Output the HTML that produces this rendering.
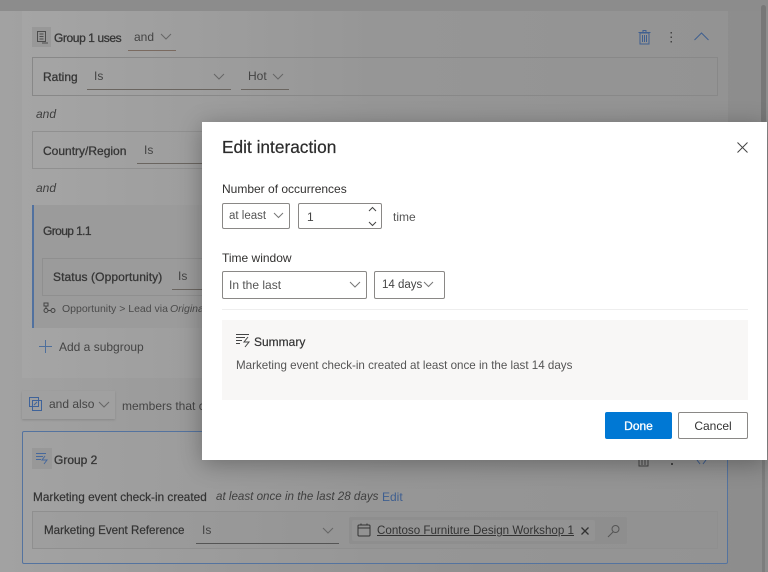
<!DOCTYPE html>
<html><head><meta charset="utf-8"><style>
html,body{margin:0;padding:0}
#p{position:relative;width:768px;height:572px;overflow:hidden;background:linear-gradient(90deg,#a2a2a2 0,#9a9a9a 190px,#8f8f8f 480px,#8d8d8d 768px);font-family:"Liberation Sans",sans-serif;font-size:12px;color:#333}
#p div,#p span.t,#p svg{position:absolute}
.t{white-space:nowrap;line-height:16px}
.b{color:#363636;-webkit-text-stroke:.3px #363636;font-size:12px}
.i{font-style:italic;color:#3f3f3f}
.u{height:1px;background:#6a6560}
.box{border:1px solid #8a8a8a;box-sizing:border-box}
.m{color:#323130}
.in{border:1px solid #8a8886;border-radius:2px;box-sizing:border-box;background:#fff}
svg{fill:none}
</style></head><body><div id="p">
<!-- background -->
<div style="left:0;top:0;width:768px;height:11px;background:#8c8c8c"></div>
<div style="left:22px;top:11px;width:706px;height:367px;background:linear-gradient(90deg,#a5a5a5,#969696 50%,#939393)"></div>
<div style="left:761px;top:5px;width:5px;height:118px;background:#777;border-radius:3px"></div>

<div style="left:32px;top:27px;width:19px;height:20px;background:#989898"></div>
<svg style="left:35px;top:30px" width="14" height="15" stroke="#4c4c4c"><path d="M2.500 1.500h8v10h-8zM4.500 4h4M4.500 6.500h4M4.500 9h4M7 13h6"/></svg>
<span class="t b" style="left:54px;top:30px;letter-spacing:-.4px">Group 1 uses</span>
<span class="t" style="left:134px;top:29px;color:#444">and</span>
<svg style="left:160px;top:33px" width="12" height="8" stroke="#666"><path d="M1 1l5 5 5-5"/></svg>
<div class="u" style="left:128px;top:50px;width:48px;background:#7a6a60"></div>
<div class="box" style="left:32px;top:57px;width:686px;height:39px;border-color:#888"></div>
<span class="t b" style="left:43px;top:69px">Rating</span>
<span class="t" style="left:94px;top:68px;color:#444">Is</span>
<svg style="left:213px;top:73px" width="12" height="8" stroke="#666"><path d="M1 1l5 5 5-5"/></svg>
<div class="u" style="left:87px;top:89px;width:144px"></div>
<span class="t" style="left:248px;top:68px;color:#444">Hot</span>
<svg style="left:272px;top:73px" width="12" height="8" stroke="#666"><path d="M1 1l5 5 5-5"/></svg>
<div class="u" style="left:241px;top:89px;width:48px"></div>
<span class="t i" style="left:36px;top:106px">and</span>
<div class="box" style="left:32px;top:131px;width:180px;height:38px;border-color:#909090"></div>
<span class="t b" style="left:43px;top:143px">Country/Region</span>
<span class="t" style="left:144px;top:142px;color:#444">Is</span>
<div class="u" style="left:137px;top:163px;width:70px"></div>
<span class="t i" style="left:36px;top:180px">and</span>

<div style="left:33px;top:205px;width:170px;height:123px;background:#9b9b9b"></div>
<div style="left:32px;top:205px;width:1.500px;height:123px;background:#51719f"></div>
<span class="t b" style="left:43px;top:223px;letter-spacing:-.6px">Group 1.1</span>
<div class="box" style="left:42px;top:258px;width:170px;height:38px;border-color:#8f8f8f"></div>
<span class="t b" style="left:53px;top:269px;letter-spacing:.1px">Status (Opportunity)</span>
<span class="t" style="left:178px;top:268px;color:#444">Is</span>
<div class="u" style="left:172px;top:289px;width:35px"></div>
<svg style="left:43px;top:302px" width="13" height="12" stroke="#444"><rect x="1" y="1" width="4" height="3"/><path d="M3 4v3"/><circle cx="3" cy="8.500" r="2"/><path d="M5 8.500h3"/><circle cx="10" cy="8.500" r="2"/></svg>
<span class="t" style="left:62px;top:301px;font-size:10.500px;color:#4a4a4a">Opportunity &gt; Lead via</span>
<span class="t" style="left:170px;top:301px;font-size:10.500px;font-style:italic;color:#4a4a4a">Origina</span>
<svg style="left:38px;top:339px" width="15" height="15" stroke="#4e6f9c"><path d="M7.500 1v13M1 7.500h13"/></svg>
<span class="t" style="left:59px;top:339px;color:#444">Add a subgroup</span>

<div style="left:22px;top:391px;width:93px;height:28px;background:#a0a0a0;box-shadow:0 1px 2px #888"></div>
<svg style="left:28px;top:396px" width="15" height="17" stroke="#3f639a"><rect x="1.500" y="1.500" width="9" height="9"/><rect x="4.500" y="4.500" width="9" height="10"/><path d="M6 9l3-3"/></svg>
<span class="t" style="left:49px;top:396px;color:#444">and also</span>
<svg style="left:98px;top:401px" width="12" height="8" stroke="#666"><path d="M1 1l5 5 5-5"/></svg>
<span class="t" style="left:122px;top:398px;color:#444">members that c</span>

<div style="left:22px;top:431px;width:706px;height:133px;box-sizing:border-box;border:1px solid #54739f;border-radius:2px;background:linear-gradient(90deg,#a2a2a2,#969696 50%,#939393)"></div>
<div style="left:32px;top:448px;width:20px;height:21px;background:#989898"></div>
<svg style="left:35px;top:452px" width="15" height="14" stroke="#46689c"><path d="M1 1.500h10M1 4.500h7M1 7.500h5M10 4l-3 4h5l-3 4"/></svg>
<span class="t b" style="left:54px;top:452px">Group 2</span>
<svg style="left:638px;top:460px" width="12" height="7" stroke="#444"><path d="M1 0v6h9V0M4 0v5M7 0v5"/></svg>
<div style="left:671px;top:463px;width:2px;height:2px;background:#444"></div>
<svg style="left:694px;top:460px" width="15" height="6" stroke="#3f5f90"><path d="M3 0l3 4M12 0l-3 4"/></svg>
<span class="t" style="left:33px;top:489px;font-size:11.800px;color:#333;-webkit-text-stroke:.2px #333">Marketing event check-in created</span>
<span class="t i" style="left:216px;top:489px;font-size:11.600px">at least once in the last 28 days</span>
<span class="t" style="left:382px;top:489px;color:#3f5f90">Edit</span>
<div style="left:32px;top:511px;width:686px;height:38px;background:linear-gradient(90deg,#9e9e9e,#949494 50%,#929292);border:1px solid #8f8f8f;box-sizing:border-box"></div>
<span class="t" style="left:44px;top:523px;font-size:11.600px;color:#333;-webkit-text-stroke:.2px #333">Marketing Event Reference</span>
<span class="t" style="left:202px;top:522px;color:#444">Is</span>
<svg style="left:322px;top:527px" width="12" height="8" stroke="#666"><path d="M1 1l5 5 5-5"/></svg>
<div class="u" style="left:196px;top:543px;width:143px;background:#555"></div>
<div style="left:349px;top:517px;width:278px;height:27px;background:#8e8e8e;border-radius:2px"></div>
<div style="left:352px;top:520px;width:243px;height:21px;background:#939393;border-radius:2px"></div>
<svg style="left:357px;top:523px" width="14" height="15" stroke="#333"><rect x="1" y="2" width="12" height="11" rx="1"/><path d="M1 5h12M4 .500v2M10 .500v2"/></svg>
<span class="t" style="left:377px;top:523px;font-size:11.600px;color:#333;text-decoration:underline">Contoso Furniture Design Workshop 1</span>
<svg style="left:581px;top:527px" width="8" height="8" stroke="#333" stroke-width="1.300"><path d="M.500.500l7 7M7.500.500l-7 7"/></svg>
<svg style="left:607px;top:524px" width="14" height="14" stroke="#555"><circle cx="8.500" cy="5" r="3.500"/><path d="M6 8l-5 5"/></svg>
<div style="left:762px;top:440px;width:3px;height:132px;background:#7d7d7d"></div>

<!-- header right icons -->
<svg style="left:638px;top:29px" width="13" height="16" stroke="#3f5f90"><path d="M2 4h9v11H2zM.500 3.500h12M5 3.500V1.500h3v2M4.500 6v7M6.500 6v7M8.500 6v7"/></svg>
<svg style="left:670px;top:32px" width="3" height="11"><rect x="0.500" y="0" width="1.500" height="1.500" fill="#444"/><rect x="0.500" y="4.500" width="1.500" height="1.500" fill="#444"/><rect x="0.500" y="9" width="1.500" height="1.500" fill="#444"/></svg>
<svg style="left:694px;top:32px" width="15" height="9" stroke="#3f5f90"><path d="M.500 8L7.500 1l7 7"/></svg>

<!-- dialog -->
<div style="left:202px;top:122px;width:565px;height:338px;background:#fff;box-shadow:0 4px 22px rgba(0,0,0,.3)"></div>
<span class="t" style="left:222px;top:137px;font-size:17.300px;line-height:20px;color:#2b2b2b;-webkit-text-stroke:.2px #2b2b2b">Edit interaction</span>
<svg style="left:737px;top:142px" width="11" height="11" stroke="#444"><path d="M.500.500l10 10M10.500.500l-10 10"/></svg>
<span class="t m" style="left:222px;top:181px">Number of occurrences</span>
<div class="in" style="left:222px;top:203px;width:68px;height:26px"></div>
<span class="t" style="left:229px;top:208px;font-size:11.500px;color:#555">at least</span>
<svg style="left:273px;top:212px" width="11" height="7" stroke="#777"><path d="M1 1l4.500 4.500L10 1"/></svg>
<div class="in" style="left:298px;top:203px;width:84px;height:26px"></div>
<span class="t" style="left:307px;top:209px;color:#444">1</span>
<svg style="left:368px;top:206px" width="9" height="21" stroke="#444"><path d="M1 5l3.500-3.500L8 5M1 16l3.500 3.500L8 16"/></svg>
<span class="t" style="left:393px;top:209px;color:#555">time</span>
<span class="t m" style="left:222px;top:250px">Time window</span>
<div class="in" style="left:222px;top:271px;width:145px;height:28px"></div>
<span class="t" style="left:229px;top:277px;color:#555">In the last</span>
<svg style="left:349px;top:281px" width="12" height="7" stroke="#777"><path d="M1 1l5 5 5-5"/></svg>
<div class="in" style="left:374px;top:271px;width:71px;height:28px"></div>
<span class="t" style="left:382px;top:277px;font-size:11.500px;color:#444">14 days</span>
<svg style="left:423px;top:281px" width="11" height="7" stroke="#777"><path d="M1 1l4.500 4.500L10 1"/></svg>
<div style="left:222px;top:309px;width:526px;height:1px;background:#eee"></div>
<div style="left:222px;top:320px;width:526px;height:80px;background:#f8f7f6"></div>
<svg style="left:235px;top:333px" width="16" height="16" stroke="#444"><path d="M1 1.500h13M1 4.500h9M1 7.500h6M1 10.500h4M13 4l-4 5h5l-4 5"/></svg>
<span class="t" style="left:254px;top:334px;color:#333;-webkit-text-stroke:.2px #333">Summary</span>
<span class="t" style="left:236px;top:358px;font-size:11.600px;color:#555">Marketing event check-in created at least once in the last 14 days</span>
<div style="left:605px;top:412px;width:67px;height:27px;background:#0078d4;border-radius:2px"></div>
<span class="t" style="left:605px;top:418px;width:67px;text-align:center;color:#fff;font-size:12px;-webkit-text-stroke:.3px #fff">Done</span>
<div class="in" style="left:678px;top:412px;width:70px;height:27px"></div>
<span class="t" style="left:678px;top:418px;width:70px;text-align:center;color:#333">Cancel</span>
</div></body></html>
